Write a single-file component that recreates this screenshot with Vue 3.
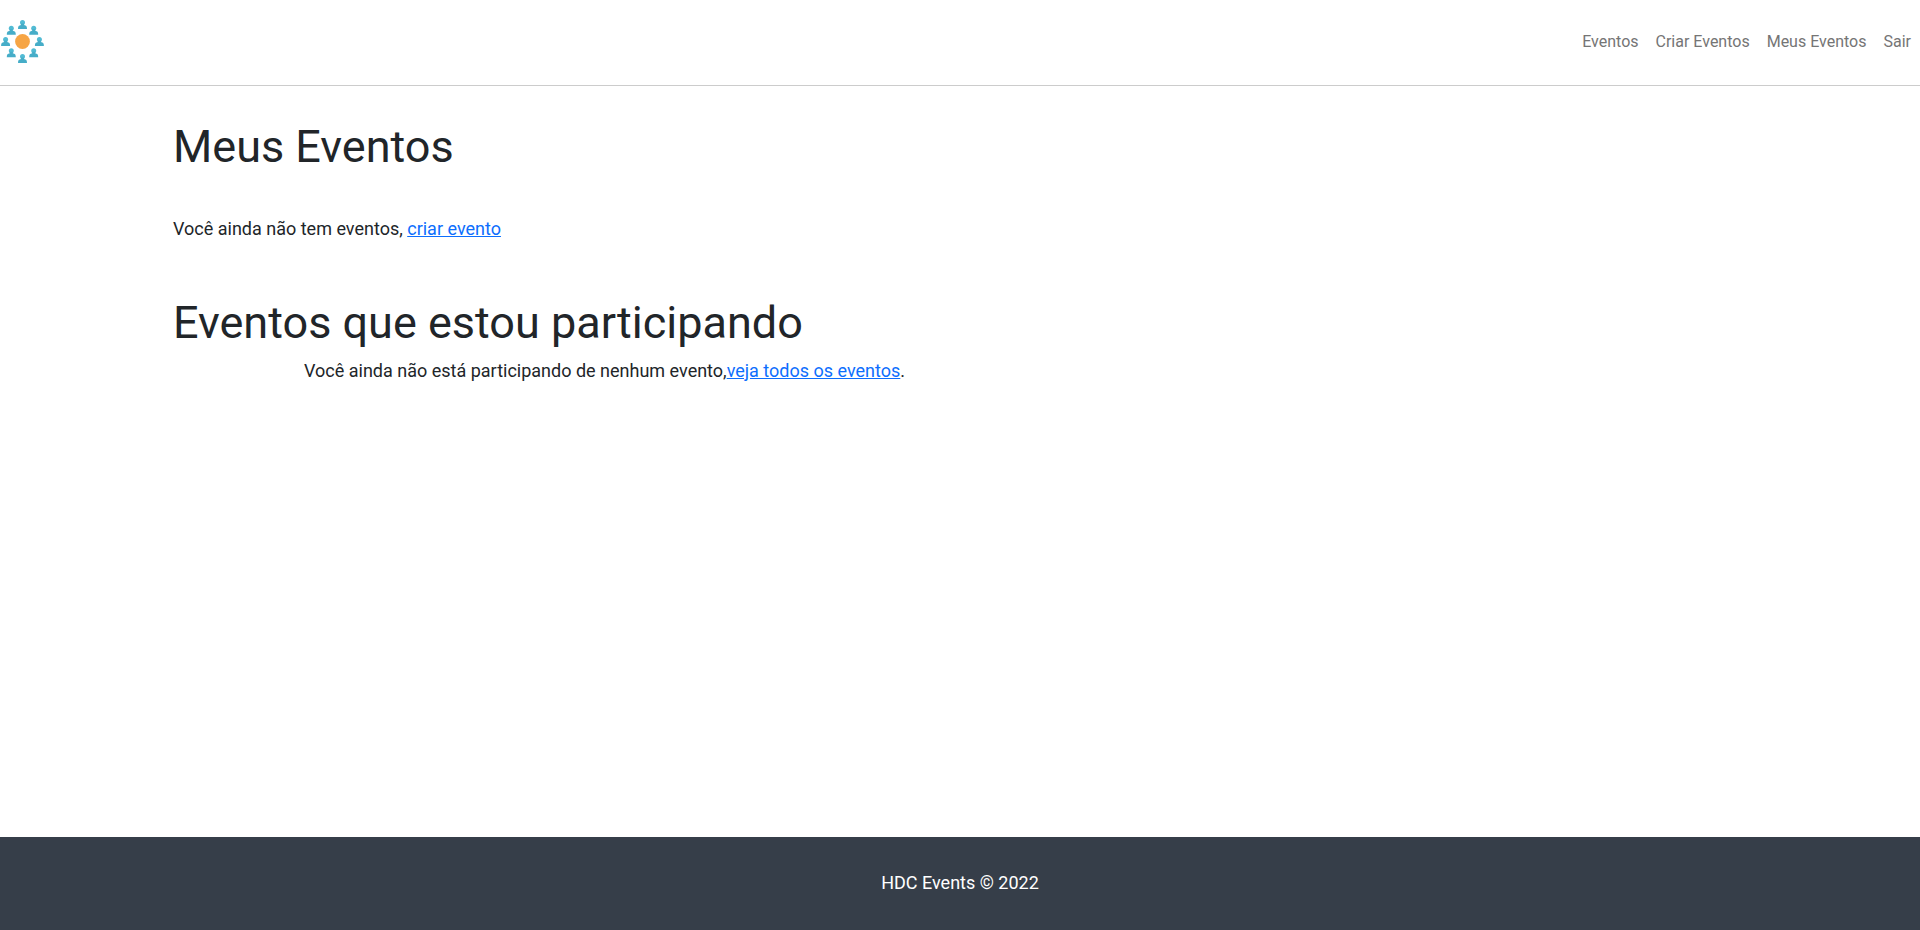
<script setup>
const links = ['Eventos', 'Criar Eventos', 'Meus Eventos', 'Sair']
const people = [
  [22.5, 20], [33.7, 25.8], [39.4, 37], [33.7, 48.2],
  [22.5, 54], [11.3, 48.2], [5.6, 37], [11.3, 25.8],
]
</script>

<template>
  <div class="page">
    <header class="header">
      <a class="brand" href="#" aria-label="HDC Events">
        <svg width="45" height="45" viewBox="0 19 45 45" aria-hidden="true">
          <circle cx="22.5" cy="41.5" r="7.4" fill="#f6a545" />
          <g v-for="([x, y], i) in people" :key="i" :transform="`translate(${x} ${y})`">
            <circle cx="0" cy="2.5" r="2.5" fill="#52bbd4" />
            <path d="M-4.5 9C-4.5 6.2-3.7 5.4-1.5 5V3.5H1.5V5C3.7 5.4 4.5 6.2 4.5 9Z" fill="#46adc8" />
          </g>
        </svg>
      </a>
      <nav class="nav">
        <a v-for="link in links" :key="link" href="#">{{ link }}</a>
      </nav>
    </header>
    <main class="main">
      <h1>Meus Eventos</h1>
      <p class="own">Você ainda não tem eventos, <a href="#">criar evento</a></p>
      <h1>Eventos que estou participando</h1>
      <p class="joined">Você ainda não está participando de nenhum evento,<a href="#">veja todos os eventos</a>.</p>
    </main>
    <footer class="footer">
      <p>HDC Events © 2022</p>
    </footer>
  </div>
</template>

<style>
body {
  margin: 0;
}
</style>

<style scoped>
.page {
  min-height: 100vh;
  display: flex;
  flex-direction: column;
  background: #fff;
  color: #212529;
  font-family: Roboto, sans-serif;
  font-size: 18px;
  line-height: 27px;
}
.header {
  display: flex;
  align-items: center;
  justify-content: space-between;
  padding: 19px 0 21px;
  border-bottom: 1px solid #ccc;
}
.brand {
  display: flex;
}
.brand svg {
  overflow: visible;
}
.nav {
  display: flex;
  gap: 17px;
  padding-right: 9px;
  font-size: 16px;
  line-height: 24px;
}
.nav a {
  color: #757575;
  text-decoration: none;
}
.main {
  flex: 1;
  padding: 34px calc(100% / 12 + 13px) 0;
}
h1 {
  margin: 0;
  font-size: 45px;
  font-weight: 400;
  line-height: 54px;
}
p {
  margin: 0;
}
p a {
  color: #0d6efd;
}
.own {
  margin: 41px 0 54px;
}
.joined {
  margin-top: 7px;
  padding-left: 131px;
}
.footer {
  padding: 32px 0 34px;
  background: #363e49;
  color: #fff;
  text-align: center;
}
</style>
